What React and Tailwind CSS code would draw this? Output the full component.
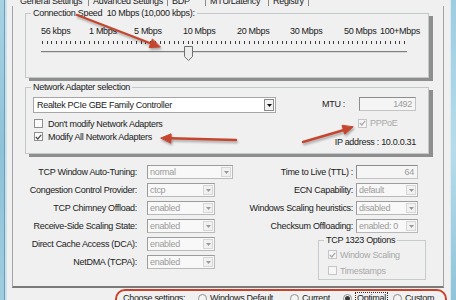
import React from 'react';

const speeds = [
    { label: '56 kbps', w: 'w-[48px]' },
    { label: '1 Mbps', w: 'w-[45px]' },
    { label: '5 Mbps', w: 'w-[49px]' },
    { label: '10 Mbps', w: 'w-[54px]' },
    { label: '20 Mbps', w: 'w-[53px]' },
    { label: '30 Mbps', w: 'w-[54px]' },
    { label: '50 Mbps', w: 'w-[36px]' },
    { label: '100+Mbps', w: 'w-[46px]' },
];

const leftRows = [
    { label: 'TCP Window Auto-Tuning:', value: 'normal', w: 'w-[86px]' },
    { label: 'Congestion Control Provider:', value: 'ctcp', w: 'w-[68px]' },
    { label: 'TCP Chimney Offload:', value: 'enabled', w: 'w-[68px]' },
    { label: 'Receive-Side Scaling State:', value: 'enabled', w: 'w-[68px]' },
    { label: 'Direct Cache Access (DCA):', value: 'enabled', w: 'w-[68px]' },
    { label: 'NetDMA (TCPA):', value: 'enabled', w: 'w-[68px]' },
];

const rightRows = [
    { label: 'ECN Capability:', value: 'default' },
    { label: 'Windows Scaling heuristics:', value: 'disabled' },
    { label: 'Checksum Offloading:', value: 'enabled: 0' },
];

const tabs = [
    { label: 'General Settings', w: 'w-[68px]', pad: '' },
    { label: 'Advanced Settings', w: 'w-[78px]', pad: 'pl-[4px]' },
    { label: 'BDP', w: 'w-[37px]', pad: 'pl-[4px]' },
    { label: 'MTU/Latency', w: 'w-[62px]', pad: 'pl-[4px]' },
    { label: 'Registry', w: 'w-[39px]', pad: 'pl-[4px]' },
];

const DropArrow = ({ color = '#9a9a9a' }) => (
    <svg width="5" height="3" viewBox="0 0 5 3">
        <path d="M0 0 H5 L2.5 3 Z" fill={color} />
    </svg>
);

const Combo = ({ value, w }) => (
    <div className={`flex h-[14px] items-center border border-[#b9b9b9] border-l-[#9c9c9c] border-t-[#9c9c9c] bg-[#f8f8f8] ${w}`}>
        <span className="flex-1 whitespace-nowrap pl-[2px] text-[#9b9b9b]">{value}</span>
        <span className="mr-[1px] flex h-[10px] w-[10px] items-center justify-center border border-[#d6d6d6] bg-[#f1f1f1]">
            <DropArrow />
        </span>
    </div>
);

const TextBox = ({ value, w }) => (
    <div className={`flex h-[14px] shrink-0 items-center justify-end border border-[#c4c4c4] border-l-[#8c8c8c] border-t-[#8c8c8c] bg-[#f5f5f5] pr-[3px] text-[#9b9b9b] ${w}`}>
        {value}
    </div>
);

const Check = ({ on, dim }) => (
    <span className={`flex h-[9px] w-[9px] shrink-0 items-center justify-center border ${dim ? 'border-[#c6c6c6] bg-[#f6f6f6]' : 'border-[#8e8f8f] bg-[#fbfbfb]'}`}>
        {on && (
            <svg width="7" height="6" viewBox="0 0 7 6">
                <path d="M0.8 3 L2.8 5 L6.2 0.8" fill="none" stroke={dim ? '#a9a9a9' : '#4a4a4a'} strokeWidth="1.2" />
            </svg>
        )}
    </span>
);

const Radio = ({ on }) => (
    <span className="flex h-[9px] w-[9px] shrink-0 items-center justify-center rounded-full border border-[#8e8f8f] bg-[#f4f4f4]">
        {on && <span className="h-[5px] w-[5px] rounded-full bg-[#3a3a3a]" />}
    </span>
);

const GroupLabel = ({ children, className = '' }) => (
    <span className={`absolute -top-[7px] left-[5px] whitespace-pre bg-[#f0f0f0] px-[2px] ${className}`}>{children}</span>
);

const App = () => {
    return (
        <div className="relative flex h-[300px] w-[456px] overflow-hidden bg-[#f0f0f0] font-['Liberation_Sans',Arial,sans-serif] text-[9px] leading-[12px] tracking-[-0.3px] text-[#202020]">
            {/* window frame, left */}
            <div className="flex w-[7px] shrink-0">
                <div className="w-[4px] bg-gradient-to-b from-[#a7d2e4] via-[#8ec2d8] to-[#9fcde0]" />
                <div className="w-[1px] bg-[#6d9db4]" />
                <div className="w-[2px] bg-[#c9e2ec]" />
            </div>

            <div className="flex min-w-0 flex-1 flex-col">
                {/* tab strip, cut at the top */}
                <div className="-mt-[5px] flex h-[11px] shrink-0 pl-[13px]">
                    {tabs.map((t) => (
                        <React.Fragment key={t.label}>
                            <span className={`${t.w} ${t.pad} whitespace-nowrap`}>{t.label}</span>
                            <span className="h-[11px] w-[1px] bg-[#8a8a8a]" />
                        </React.Fragment>
                    ))}
                </div>

                {/* tab page */}
                <div className="ml-[5px] mr-[6px] flex h-[282px] shrink-0 flex-col border-x border-b-2 border-x-[#a3a3a3] border-b-[#7a7a7a] pl-[12px]">
                    {/* Connection speed */}
                    <div className="relative mt-[7px] h-[65px] w-[404px] shrink-0 border border-[#c3c8cb] pl-[15px] pt-[11px] shadow-[4px_3px_0_#8e8e8e]">
                        <GroupLabel>Connection Speed  10 Mbps (10,000 kbps):</GroupLabel>
                        <div className="flex h-[12px]">
                            {speeds.map((s) => (
                                <span key={s.label} className={`${s.w} shrink-0 whitespace-nowrap`}>{s.label}</span>
                            ))}
                        </div>
                        <svg className="ml-[1px] mt-[4px] block" width="366" height="3" viewBox="0 0 366 3">
                            {Array.from({ length: 78 }, (_, i) => (
                                <rect key={i} x={Math.round(i * 4.7)} y="0" width="1" height="3" fill="#3c3c3c" />
                            ))}
                        </svg>
                        <div className="relative mt-[1px] h-[15px] w-[366px]">
                            <div className="absolute left-0 right-0 top-[6px] h-[2px] border-t border-[#7f7f7f] bg-[#d8d8d8]" />
                            <svg className="absolute left-[143px] top-[1px]" width="10" height="15" viewBox="0 0 10 15">
                                <path d="M0.5 0.5 H8.5 V10.5 L4.5 14.5 L0.5 10.5 Z" fill="#ececec" stroke="#6f6f6f" />
                            </svg>
                        </div>
                    </div>

                    {/* Network adapter */}
                    <div className="relative mt-[9px] flex h-[67px] w-[404px] shrink-0 border border-[#c3c8cb] pl-[7px] pr-[12px] pt-[9px] shadow-[4px_3px_0_#8e8e8e]">
                        <GroupLabel>Network Adapter selection</GroupLabel>
                        <div className="flex flex-col">
                            <div className="flex h-[16px] w-[243px] items-center border border-[#a6a6a6] bg-white">
                                <span className="flex-1 pl-[3px] text-[#1a1a1a]">Realtek PCIe GBE Family Controller</span>
                                <span className="mr-[1px] flex h-[12px] w-[10px] items-center justify-center border border-[#8a8a8a] bg-[#f2f2f2]">
                                    <DropArrow color="#111" />
                                </span>
                            </div>
                            <div className="mt-[4px] flex h-[13px] items-center gap-[5px] pl-[1px]">
                                <Check />
                                <span>Don't modify Network Adapters</span>
                            </div>
                            <div className="flex h-[13px] items-center gap-[5px] pl-[1px]">
                                <Check on />
                                <span>Modify All Network Adapters</span>
                            </div>
                        </div>
                        <div className="ml-auto flex w-[92px] flex-col">
                            <div className="flex h-[14px] items-center justify-end">
                                <span className="whitespace-nowrap">MTU :</span>
                                <TextBox value="1492" w="ml-[14px] w-[57px]" />
                            </div>
                            <div className="mt-[7px] flex h-[10px] items-center gap-[3px] pl-[34px]">
                                <Check on dim />
                                <span className="text-[#a8a8a8]">PPPoE</span>
                            </div>
                            <div className="mt-[8px] h-[12px] whitespace-nowrap text-right">IP address : 10.0.0.31</div>
                        </div>
                    </div>

                    {/* TCP options */}
                    <div className="mt-[9px] flex pr-[17px]">
                        <div className="flex flex-col">
                            {leftRows.map((r) => (
                                <div key={r.label} className="flex h-[18px] items-center">
                                    <span className="w-[112px] whitespace-nowrap text-right">{r.label}</span>
                                    <div className="ml-[10px]">
                                        <Combo value={r.value} w={r.w} />
                                    </div>
                                </div>
                            ))}
                        </div>
                        <div className="ml-auto flex flex-col items-end">
                            <div className="flex h-[18px] items-center pr-[8px]">
                                <span className="whitespace-nowrap">Time to Live (TTL) :</span>
                                <TextBox value="64" w="ml-[3px] w-[62px]" />
                            </div>
                            {rightRows.map((r) => (
                                <div key={r.label} className="flex h-[18px] items-center pr-[8px]">
                                    <span className="whitespace-nowrap">{r.label}</span>
                                    <div className="ml-[3px]">
                                        <Combo value={r.value} w="w-[62px]" />
                                    </div>
                                </div>
                            ))}
                            <div className="relative mt-[5px] flex h-[40px] w-[108px] flex-col border border-[#c6cbce] pl-[9px] pt-[7px]">
                                <GroupLabel className="left-[3px]">TCP 1323 Options</GroupLabel>
                                <div className="flex h-[13px] items-center gap-[3px]">
                                    <Check on dim />
                                    <span className="text-[#a8a8a8]">Window Scaling</span>
                                </div>
                                <div className="mt-[3px] flex h-[13px] items-center gap-[3px]">
                                    <Check dim />
                                    <span className="text-[#a8a8a8]">Timestamps</span>
                                </div>
                            </div>
                        </div>
                    </div>
                </div>

                {/* settings choice, ringed in red */}
                <div className="ml-[108px] mt-[1px] h-[24px] w-[332px] shrink-0 rounded-[10px] border-2 border-[#c8412b] pl-[6px]">
                    <div className="mt-[1px] flex h-[12px] items-center whitespace-nowrap">
                        <span className="w-[75px]">Choose settings:</span>
                        <span className="flex w-[92px] items-center gap-[3px]"><Radio />Windows Default</span>
                        <span className="flex w-[53px] items-center gap-[3px]"><Radio />Current</span>
                        <span className="flex w-[50px] items-center gap-[3px]"><Radio on /><span className="border border-dotted border-[#333] px-[1px] leading-[10px]">Optimal</span></span>
                        <span className="flex items-center gap-[3px]"><Radio />Custom</span>
                    </div>
                </div>
            </div>

            {/* window frame, right */}
            <div className="flex w-[6px] shrink-0">
                <div className="w-[1px] bg-[#d8e9f0]" />
                <div className="flex-1 bg-gradient-to-b from-[#9ccde1] via-[#b6dcea] to-[#8fc4d9]" />
            </div>

            {/* red annotation arrows */}
            <svg className="pointer-events-none absolute left-0 top-0 drop-shadow-[1px_2px_1px_rgba(0,0,0,0.3)]" width="456" height="300" viewBox="0 0 456 300">
                <g fill="#c6452f" stroke="#c6452f" strokeLinecap="round">
                    <line x1="77" y1="15" x2="151" y2="43.5" strokeWidth="2.4" />
                    <polygon points="160,47 149.1,47.6 152.3,39.2" strokeWidth="1" />
                    <line x1="236" y1="140" x2="170" y2="138.3" strokeWidth="2.4" />
                    <polygon points="161,138 171.1,133.8 170.9,142.8" strokeWidth="1" />
                    <line x1="303" y1="142" x2="344" y2="130" strokeWidth="2.4" />
                    <polygon points="353,127 344.7,134.2 342.1,125.6" strokeWidth="1" />
                </g>
            </svg>
        </div>
    );
};

export default App;
